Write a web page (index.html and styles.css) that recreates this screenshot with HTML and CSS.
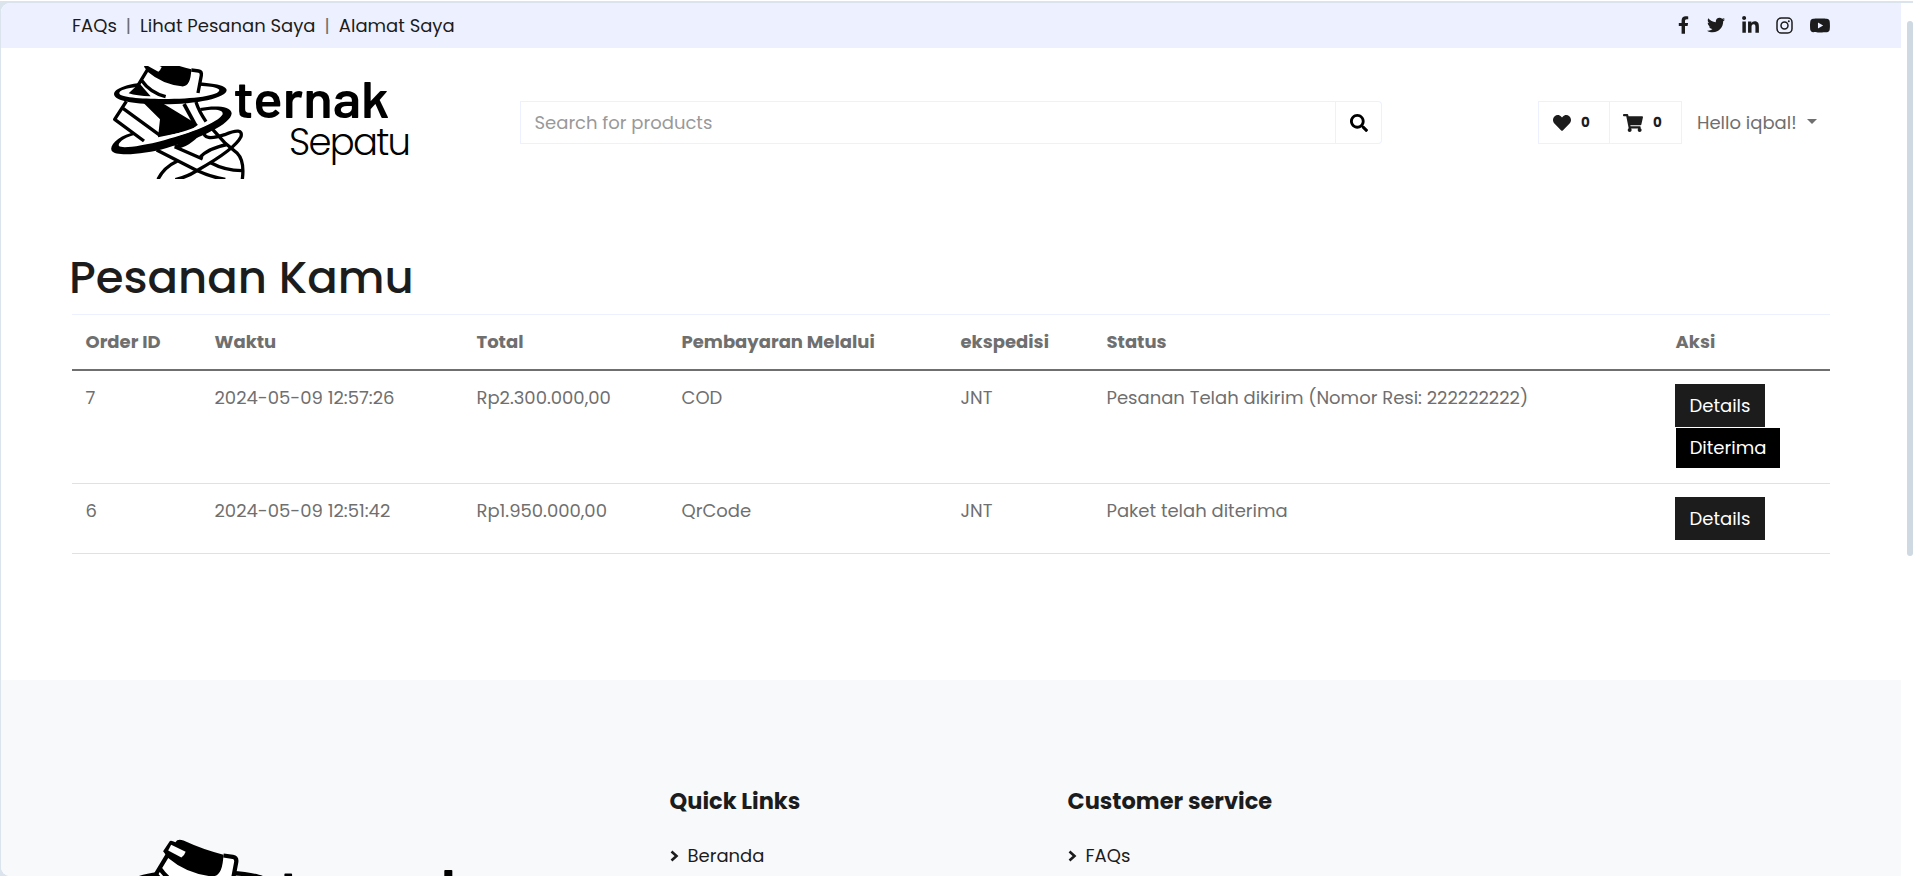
FILE: index.html
```html
<!DOCTYPE html>
<html lang="id">
<head>
<meta charset="utf-8">
<title>Ternak Sepatu</title>
<link rel="stylesheet" href="styles.css">
</head>
<body>
<svg class="defs" aria-hidden="true">
  <symbol id="logo" viewBox="100 50 320 140">
    <g transform="scale(.33333)" fill="none" stroke="#000" stroke-width="10" stroke-linejoin="round">
      <!-- upper ring -->
      <path fill="#000" stroke="none" fill-rule="evenodd" d="M342 282C344 262 400 246 480 244C590 242 680 250 680 270C680 294 590 313 490 313C410 313 342 304 342 282ZM358 280C358 292 420 297 490 297C580 297 658 287 658 270C656 258 590 254 500 256C410 258 358 266 358 280Z"/>
      <!-- collar -->
      <path fill="#fff" stroke="none" d="M443 208L418 252L395 282L500 294L594 280L604 216L574 210Z"/>
      <path d="M443 208L414 256M574 210L596 213Q606 215 604 226L594 279M424 240Q450 278 497 290"/>
      <path fill="#000" stroke="none" d="M386 280L418 250L452 289Q410 288 386 280Z"/>
      <path fill="#000" stroke="none" d="M448 176Q452 174 461 179Q466 170 480 175Q530 198 574 208Q572 262 545 259Q486 252 444 216L432 200Z"/>
      <path fill="#fff" stroke="none" d="M451 185L485 201Q482 210 475 215L444 198Z"/>
      <!-- shoe body -->
      <path d="M379 304L344 358L432 423M370 326L480 406"/>
      <path fill="#000" stroke="none" d="M430 308L488 310L594 374L570 392L474 412L480 358Z"/>
      <path stroke-width="11" d="M552 312L587 376"/>
      <path d="M588 306Q596 332 618 365"/>
      <!-- middle ring -->
      <path fill="#000" stroke="none" d="M396 398C350 410 328 438 335 452C345 470 430 464 500 444C600 416 694 372 695 340C694 317 640 316 600 324L604 333C650 326 670 330 668 343C655 368 570 400 495 420C420 440 365 446 357 438C352 430 370 414 402 405Z"/>
      <path stroke="#fff" stroke-width="7" d="M440 424C520 411 610 384 655 350"/>
      <path fill="#000" stroke="none" d="M520 438L600 405Q568 437 542 444Z"/>
      <!-- lower ring and sole -->
      <path d="M612 392C608 416 632 418 674 404C712 388 728 390 723 410C708 442 640 484 594 510Q560 532 526 539"/>
      <path d="M638 388L676 430L712 460Q734 482 727 538M470 450L589 511Q634 532 676 538M524 440L608 477M599 474Q620 446 681 434M531 484Q492 502 474 538M632 488Q674 511 726 512"/>
    </g>
  </symbol>
</svg>
<div class="frame">
  <div class="page">
    <div class="topbar">
      <nav class="toplinks">
        <a>FAQs</a><i>|</i><a>Lihat Pesanan Saya</a><i>|</i><a>Alamat Saya</a>
      </nav>
      <div class="social">
        <svg width="11" height="18" viewBox="0 0 320 512"><path d="M279.14 288l14.22-92.66h-88.91v-60.13c0-25.35 12.42-50.06 52.24-50.06h40.42V6.26S260.43 0 225.36 0c-73.22 0-121.08 44.38-121.08 124.72v70.62H22.89V288h81.39v224h100.17V288z"/></svg>
        <svg width="18" height="18" viewBox="0 0 512 512"><path d="M459.37 151.716c.325 4.548.325 9.097.325 13.645 0 138.72-105.583 298.558-298.558 298.558-59.452 0-114.68-17.219-161.137-47.106 8.447.974 16.568 1.299 25.34 1.299 49.055 0 94.213-16.568 130.274-44.832-46.132-.975-84.792-31.188-98.112-72.772 6.498.974 12.995 1.624 19.818 1.624 9.421 0 18.843-1.3 27.614-3.573-48.081-9.747-84.143-51.98-84.143-102.985v-1.299c13.969 7.797 30.214 12.67 47.431 13.319-28.264-18.843-46.781-51.005-46.781-87.391 0-19.492 5.197-37.36 14.294-52.954 51.655 63.675 129.3 105.258 216.365 109.807-1.624-7.797-2.599-15.918-2.599-24.04 0-57.828 46.782-104.934 104.934-104.934 30.213 0 57.502 12.67 76.67 33.137 23.715-4.548 46.456-13.32 66.599-25.34-7.798 24.366-24.366 44.833-46.132 57.827 21.117-2.273 41.584-8.122 60.426-16.243-14.292 20.791-32.161 39.308-52.628 54.253z"/></svg>
        <svg width="17" height="18" viewBox="0 0 448 480"><path d="M100.28 448H7.4V148.9h92.88zM53.79 108.1C24.09 108.1 0 83.5 0 53.8a53.79 53.79 0 0 1 107.58 0c0 29.7-24.1 54.3-53.79 54.3zM447.9 448h-92.68V302.4c0-34.7-.7-79.2-48.29-79.2-48.29 0-55.69 37.7-55.69 76.7V448h-92.78V148.9h89.08v40.8h1.3c12.4-23.5 42.69-48.3 87.88-48.3 94 0 111.28 61.9 111.28 142.3V448z"/></svg>
        <svg width="17" height="17" viewBox="0 0 17 17"><g fill="none" stroke="#1c1c1c" stroke-width="1.5"><rect x="1" y="1" width="15" height="15" rx="4.2"/><circle cx="8.5" cy="8.5" r="3.5"/></g><circle cx="12.8" cy="4.3" r="1"/></svg>
        <svg width="20" height="15" viewBox="14 64 548 384"><path d="M549.655 124.083c-6.281-23.65-24.787-42.276-48.284-48.597C458.781 64 288 64 288 64S117.22 64 74.629 75.486c-23.497 6.322-42.003 24.947-48.284 48.597-11.412 42.867-11.412 132.305-11.412 132.305s0 89.438 11.412 132.305c6.281 23.65 24.787 41.5 48.284 47.821C117.22 448 288 448 288 448s170.78 0 213.371-11.486c23.497-6.321 42.003-24.171 48.284-47.821 11.412-42.867 11.412-132.305 11.412-132.305s0-89.438-11.412-132.305zm-317.51 213.508V175.185l142.739 81.205-142.739 81.201z"/></svg>
      </div>
    </div>

    <header class="header">
      <svg class="logo" viewBox="0 16 320 113"><use href="#logo" width="320" height="140"/><text x="133.500" y="68" class="logo-a" textLength="156" lengthAdjust="spacingAndGlyphs">ternak</text><text x="189" y="105" class="logo-b" textLength="122">Sepatu</text></svg>
      <form class="search">
        <div class="field">Search for products</div>
        <div class="go"><svg width="18" height="18" viewBox="0 0 512 512"><path d="M505 442.7L405.3 343c-4.5-4.5-10.600-7-17-7H372c27.600-35.300 44-79.700 44-128C416 93.100 322.900 0 208 0S0 93.100 0 208s93.100 208 208 208c48.300 0 92.700-16.400 128-44v16.300c0 6.400 2.500 12.500 7 17l99.700 99.700c9.400 9.400 24.600 9.400 33.900 0l28.300-28.300c9.400-9.400 9.400-24.600.100-34zM208 336c-70.700 0-128-57.200-128-128 0-70.700 57.200-128 128-128 70.700 0 128 57.200 128 128 0 70.700-57.200 128-128 128z"/></svg></div>
      </form>
      <div class="account">
        <div class="count"><svg width="18" height="18" viewBox="0 0 512 512"><path d="M462.300 62.600C407.500 15.900 326 24.300 275.700 76.200L256 96.500l-19.700-20.300C186.100 24.300 104.500 15.900 49.700 62.600c-62.800 53.600-66.100 149.800-9.900 207.900l193.500 199.800c12.500 12.900 32.800 12.900 45.300 0l193.500-199.800c56.300-58.100 53-154.300-9.800-207.900z"/></svg><b>0</b></div>
        <div class="count cart"><svg width="20" height="18" viewBox="0 0 576 512"><path d="M528.120 301.319l47.273-208C578.806 78.301 567.391 64 551.990 64H159.208l-9.166-44.810C147.758 8.021 137.930 0 126.529 0H24C10.745 0 0 10.745 0 24v16c0 13.255 10.745 24 24 24h69.883l70.248 343.435C147.325 417.100 136 435.222 136 456c0 30.928 25.072 56 56 56s56-25.072 56-56c0-15.674-6.447-29.835-16.824-40h209.647C430.447 426.165 424 440.326 424 456c0 30.928 25.072 56 56 56s56-25.072 56-56c0-22.172-12.888-41.332-31.579-50.405l5.517-24.276c3.413-15.018-8.002-29.319-23.403-29.319H218.117l-6.545-32h293.145c11.206 0 20.920-7.754 23.403-18.681z"/></svg><b>0</b></div>
        <span class="hello">Hello iqbal!</span><span class="caret"></span>
      </div>
    </header>

    <main class="main">
      <h1>Pesanan Kamu</h1>
      <table class="orders">
        <colgroup><col class="c1"><col class="c2"><col class="c3"><col class="c4"><col class="c5"><col class="c6"><col class="c7"></colgroup>
        <thead><tr><th>Order ID</th><th>Waktu</th><th>Total</th><th>Pembayaran Melalui</th><th>ekspedisi</th><th>Status</th><th>Aksi</th></tr></thead>
        <tbody>
          <tr class="tall"><td>7</td><td>2024-05-09 12:57:26</td><td>Rp2.300.000,00</td><td>COD</td><td>JNT</td><td>Pesanan Telah dikirim (Nomor Resi: 222222222)</td><td class="act"><div class="actions"><a class="btn details">Details</a><a class="btn done">Diterima</a></div></td></tr>
          <tr class="short"><td>6</td><td>2024-05-09 12:51:42</td><td>Rp1.950.000,00</td><td>QrCode</td><td>JNT</td><td>Paket telah diterima</td><td class="act"><div class="actions"><a class="btn details">Details</a></div></td></tr>
        </tbody>
      </table>
    </main>

    <footer class="footer">
      <svg class="foot-logo" viewBox="0 0 320 140"><use href="#logo" width="320" height="140"/><text x="133.500" y="68" class="logo-a" textLength="156" lengthAdjust="spacingAndGlyphs">ternak</text></svg>
      <section class="quick"><h5>Quick Links</h5><a><svg width="9" height="12" viewBox="0 0 9 12"><path d="M1.500 1.500L6.500 6L1.500 10.500"/></svg>Beranda</a></section>
      <section class="service"><h5>Customer service</h5><a><svg width="9" height="12" viewBox="0 0 9 12"><path d="M1.500 1.500L6.500 6L1.500 10.500"/></svg>FAQs</a></section>
    </footer>
  </div>
  <div class="scroll"><div class="thumb"></div></div>
</div>
</body>
</html>
```
FILE: styles.css
```css
* { box-sizing: border-box; }
body {
  margin: 0;
  height: 876px;
  overflow: hidden;
  padding: 1px 0 0;
  background: #dbe3ec;
  box-shadow: inset 0 1px #fff;
  font: 400 18px/26px Poppins, Inter, "Open Sans", sans-serif;
  color: #6f6f6f;
}
.defs { position: absolute; width: 0; height: 0; }
.logo-a { font: 600 52px Barlow, Roboto, sans-serif; }
.logo-b { font: 300 37px Poppins, Inter, sans-serif; }

.frame {
  display: flex;
  height: 873px;
  margin: 2px 0 0 1px;
  background: #fff;
  border-radius: 9px 0 0 9px;
  overflow: hidden;
}
.page { width: 1900px; flex: none; }
.scroll { width: 12px; padding: 18px 0 0 6px; }
.thumb { height: 535px; background: #ced9e2; border-radius: 4px; }

.topbar {
  display: flex;
  justify-content: space-between;
  height: 45px;
  padding: 0 71px;
  background: #edf1ff;
  color: #1c1c1c;
}
.toplinks { display: flex; align-items: center; padding-top: 1px; }
.toplinks i { width: 23.300px; text-align: center; font-style: normal; color: #6f6f6f; }
.social { display: flex; align-items: center; gap: 17px; padding-bottom: 1px; }
.social svg, .go svg, .count svg { fill: #1c1c1c; display: block; }
.social svg:first-child { margin-right: 1px; }

.header { display: flex; align-items: center; height: 149px; }
.logo { width: 320px; height: 113px; margin-left: 99px; }
.search { display: flex; width: 862px; height: 43px; margin-left: 100px; }
.field {
  width: 816px;
  padding: 8px 13.500px;
  border: 1px solid #edf1ff;
  color: #999;
}
.go {
  display: grid;
  place-items: center;
  width: 46px;
  border: 1px solid #edf1ff;
  border-left: 0;
  border-radius: 0 4px 4px 0;
}
.go svg { fill: #000; }
.account { display: flex; align-items: center; margin-left: 156px; }
.count {
  display: flex;
  align-items: center;
  gap: 10px;
  width: 72px;
  height: 43px;
  padding-left: 14px;
  border: 1px solid #edf1ff;
  color: #1c1c1c;
}
.count b { font-size: 13.500px; font-weight: 700; }
.cart { border-left: 0; padding-left: 13px; }
.hello { margin-left: 15px; }
.caret {
  margin: -3px 0 0 10px;
  border: 5px solid transparent;
  border-top-color: #6f6f6f;
  border-bottom: 0;
}

.main { height: 483px; padding: 53px 71px 0; }
h1 {
  height: 64px;
  margin: 0 0 0 -3px;
  font-size: 45px;
  line-height: 56px;
  font-weight: 500;
  color: #1c1c1c;
}
.orders { width: 1758px; table-layout: fixed; border-collapse: separate; border-spacing: 0; }
.c1 { width: 129px; } .c2 { width: 262px; } .c3 { width: 205px; } .c4 { width: 279px; }
.c5 { width: 146px; } .c6 { width: 569px; } .c7 { width: 168px; }
th {
  height: 57px;
  padding: 0 13.500px;
  border-top: 1px solid #edf1ff;
  border-bottom: 2px solid #6f6f6f;
  text-align: left;
  font-weight: 700;
}
td { padding: 14px 13.500px 0; border-bottom: 1px solid #dee2e6; vertical-align: top; white-space: nowrap; }
td.act { padding: 13px 13px 0; }
.tall td { height: 113px; }
.short td { height: 70px; }
.actions { display: flex; flex-direction: column; align-items: flex-start; gap: 1px; }
.btn { color: #fff; text-align: center; }
.details { width: 90px; height: 43px; line-height: 43px; background: #1c1c1c; }
.done { width: 104px; height: 40px; margin-left: 1px; line-height: 39px; background: #000; }

.footer { display: flex; height: 196px; background: #f8f9fb; color: #1c1c1c; overflow: hidden; }
.foot-logo { flex: none; width: 408px; height: 178.500px; margin: 149.500px 0 0 106px; }
.quick { width: 398px; margin-left: 154.500px; padding-top: 108px; }
.service { padding-top: 108px; }
h5 { margin: 0; font-size: 22.500px; line-height: 26px; font-weight: 700; }
.footer a { display: flex; align-items: center; height: 26px; margin-top: 29px; }
.footer a svg { margin-right: 9px; fill: none; stroke: #1c1c1c; stroke-width: 2.600px; }
```
